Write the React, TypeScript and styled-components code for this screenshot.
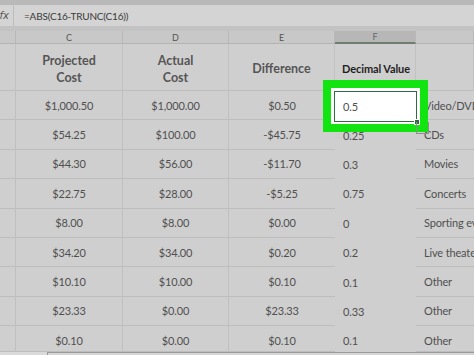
import React from "react";
import styled, { createGlobalStyle, css } from "styled-components";

const GlobalStyle = createGlobalStyle`
  html, body { margin: 0; padding: 0; background: #cfcfcf; overflow: hidden; }
  #root { width: 474px; height: 355px; }
`;

const Page = styled.div`
  position: relative;
  width: 474px;
  height: 355px;
  overflow: hidden;
  display: flex;
  flex-direction: column;
  background: #cfcfcf;
  font-family: Lato, "Open Sans", sans-serif;
`;

const TopStrip = styled.div`
  height: 5px;
  background: #b9b9b9;
  flex: none;
`;

const FormulaBar = styled.div`
  height: 21px;
  flex: none;
  display: flex;
  align-items: stretch;
  background: #d4d4d4;
  border-bottom: 1px solid #c2c2c2;
`;

const FxBox = styled.div`
  width: 9px;
  overflow: hidden;
  display: flex;
  align-items: center;
  justify-content: flex-end;
  border-right: 1px solid #bdbdbd;
  font: italic 10px "DejaVu Sans", sans-serif;
  color: #555;
  padding-right: 4px;
  white-space: nowrap;
`;

const Formula = styled.div`
  display: flex;
  align-items: center;
  padding-left: 10px;
  padding-top: 1px;
  font-size: 10px;
  color: #3a3a3a;
  letter-spacing: -0.2px;
`;

const Gap = styled.div`
  height: 4px;
  flex: none;
  background: #c3c3c3;
`;

const Sheet = styled.div`
  flex: none;
  display: grid;
  grid-template-columns: 16px 107px 106px 106px 81px 1fr;
  grid-template-rows: 13px 47px repeat(8, 29.4px) 25.6px;
`;

const ColHead = styled.div<{ $sel?: boolean }>`
  display: flex;
  align-items: center;
  justify-content: center;
  font-size: 9px;
  color: #555;
  background: #c8c8c8;
  border-right: 1px solid #b8b8b8;
  border-bottom: 1px solid #b4b4b4;
  ${(p) =>
    p.$sel &&
    css`
      background: #b7b7b7;
      border-bottom: 2px solid #6f7d70;
      color: #666;
    `}
`;

const TitleCell = styled.div<{ $fcol?: boolean }>`
  display: flex;
  align-items: center;
  justify-content: center;
  text-align: center;
  font-weight: 700;
  font-size: 12.5px;
  line-height: 17px;
  padding-top: 3px;
  color: #555;
  border-right: 1px solid #c2c2c2;
  border-bottom: 1px solid #bebebe;
  ${(p) =>
    p.$fcol &&
    css`
      font-size: 11px;
      color: #1e1e1e;
      letter-spacing: -0.1px;
      padding-left: 2px;
    `}
`;

type Kind = "num" | "diff" | "dec" | "cat" | "side";

const Cell = styled.div<{ $kind: Kind; $last?: boolean }>`
  display: flex;
  align-items: center;
  font-size: 11px;
  color: #4f4f4f;
  white-space: nowrap;
  overflow: hidden;
  letter-spacing: -0.15px;
  ${(p) => p.$last && css`padding-top: 4px;`}
  ${(p) =>
    (p.$kind === "num" || p.$kind === "side") &&
    css`
      border-right: 1px solid #c0c0c0;
      border-bottom: 1px solid #bdbdbd;
    `}
  ${(p) =>
    (p.$kind === "num" || p.$kind === "diff") &&
    css`
      justify-content: center;
    `}
  ${(p) =>
    p.$kind === "diff" &&
    css`
      border-bottom: 1px solid #bdbdbd;
    `}
  ${(p) =>
    p.$kind === "dec" &&
    css`
      padding-left: 8px;
    `}
  ${(p) =>
    p.$kind === "cat" &&
    css`
      padding-left: 8px;
      border-bottom: 1px solid #bdbdbd;
    `}
`;

const Highlight = styled.div`
  position: absolute;
  left: 323px;
  top: 80px;
  width: 105px;
  height: 52px;
  box-sizing: border-box;
  border: 8px solid #12e412;
  background: #ffffff;
`;

const CellCursor = styled.div`
  position: absolute;
  left: 334px;
  top: 91px;
  width: 83px;
  height: 31px;
  box-sizing: border-box;
  border: 1px solid #2f6b3f;
  display: flex;
  align-items: center;
  padding-left: 8px;
  font-size: 11px;
  color: #4f4f4f;
  letter-spacing: -0.15px;
`;

const FillHandle = styled.div`
  position: absolute;
  left: 414px;
  top: 119px;
  width: 4px;
  height: 4px;
  background: #2f6b3f;
  border: 1px solid #fff;
`;

const QuickIcon = styled.div`
  position: absolute;
  left: 416px;
  top: 122px;
  width: 13px;
  height: 12px;
  box-sizing: border-box;
  border: 1px solid #8e8e8e;
  border-top: none;
`;

const BottomBar = styled.div`
  flex: none;
  height: 4px;
  display: flex;
`;

const BottomLeft = styled.div`
  width: 47px;
  background: #dadada;
`;

const BottomRight = styled.div`
  flex: 1;
  background: #d6d6d6;
  border-top: 1px solid #9a9a9a;
  border-left: 1px solid #9a9a9a;
`;

const rows: [string, string, string, string, string][] = [
  ["$1,000.50", "$1,000.00", "$0.50", "", "Video/DVD"],
  ["$54.25", "$100.00", "-$45.75", "0.25", "CDs"],
  ["$44.30", "$56.00", "-$11.70", "0.3", "Movies"],
  ["$22.75", "$28.00", "-$5.25", "0.75", "Concerts"],
  ["$8.00", "$8.00", "$0.00", "0", "Sporting events"],
  ["$34.20", "$34.00", "$0.20", "0.2", "Live theater"],
  ["$10.10", "$10.00", "$0.10", "0.1", "Other"],
  ["$23.33", "$0.00", "$23.33", "0.33", "Other"],
  ["$0.10", "$0.00", "$0.10", "0.1", "Other"],
];

export default function App() {
  return (
    <>
      <GlobalStyle />
      <Page>
        <TopStrip />
        <FormulaBar>
          <FxBox>fx</FxBox>
          <Formula>=ABS(C16-TRUNC(C16))</Formula>
        </FormulaBar>
        <Gap />
        <Sheet>
          <ColHead />
          <ColHead>C</ColHead>
          <ColHead>D</ColHead>
          <ColHead>E</ColHead>
          <ColHead $sel>F</ColHead>
          <ColHead />

          <TitleCell />
          <TitleCell>
            Projected
            <br />
            Cost
          </TitleCell>
          <TitleCell>
            Actual
            <br />
            Cost
          </TitleCell>
          <TitleCell>Difference</TitleCell>
          <TitleCell $fcol>Decimal Value</TitleCell>
          <TitleCell />

          {rows.map((r, i) => {
            const last = i === rows.length - 1;
            return (
              <React.Fragment key={i}>
                <Cell $kind="side" $last={last} />
                <Cell $kind="num" $last={last}>{r[0]}</Cell>
                <Cell $kind="num" $last={last}>{r[1]}</Cell>
                <Cell $kind="diff" $last={last}>{r[2]}</Cell>
                <Cell $kind="dec" $last={last}>{r[3]}</Cell>
                <Cell $kind="cat" $last={last}>{r[4]}</Cell>
              </React.Fragment>
            );
          })}
        </Sheet>
        <BottomBar>
          <BottomLeft />
          <BottomRight />
        </BottomBar>
        <Highlight />
        <CellCursor>0.5</CellCursor>
        <FillHandle />
        <QuickIcon />
      </Page>
    </>
  );
}
